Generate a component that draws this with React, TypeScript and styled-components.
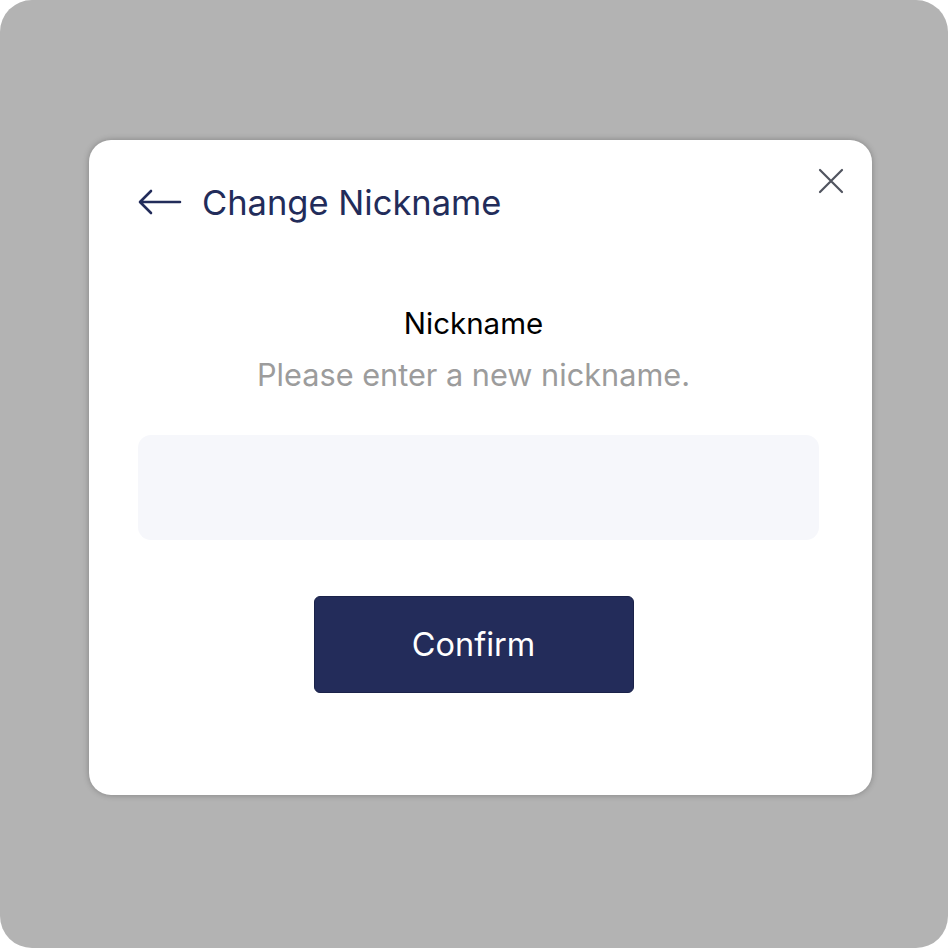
import styled, { createGlobalStyle } from 'styled-components'

const GlobalStyle = createGlobalStyle`
  html, body {
    margin: 0;
    padding: 0;
    background: #ffffff;
  }
  * {
    box-sizing: border-box;
  }
`

const App = () => {
    return (
        <>
            <GlobalStyle />
            <Screen>
                <Modal>
                    <CloseButton aria-label="Close">
                        <svg width="26" height="26" viewBox="0 0 26 26" fill="none">
                            <path d="M2 2L24 24M24 2L2 24" stroke="#50545f" strokeWidth="2.2" strokeLinecap="round" />
                        </svg>
                    </CloseButton>

                    <Header>
                        <BackButton aria-label="Back">
                            <svg width="44" height="26" viewBox="0 0 44 26" fill="none">
                                <path d="M42 13H3M13 2L2 13L13 24" stroke="#222c5a" strokeWidth="2.6" strokeLinecap="round" strokeLinejoin="round" />
                            </svg>
                        </BackButton>
                        <Title>Change Nickname</Title>
                    </Header>

                    <Body>
                        <Label>Nickname</Label>
                        <Hint>Please enter a new nickname.</Hint>
                        <Field type="text" />
                        <ConfirmButton>Confirm</ConfirmButton>
                    </Body>
                </Modal>
            </Screen>
        </>
    )
}

export default App

const Screen = styled.div`
width: 948px;
height: 948px;
background-color: #b3b3b3;
border-radius: 32px;
padding: 140px 76px 0 89px;
font-family: Inter, "Noto Sans", sans-serif;
`;

const Modal = styled.div`
position: relative;
width: 783px;
height: 655px;
background-color: #ffffff;
border-radius: 22px;
box-shadow: 0 0 6px rgba(0, 0, 0, 0.28);
padding: 42px 53px 0 49px;
display: flex;
flex-direction: column;
`;

const CloseButton = styled.button`
position: absolute;
top: 28px;
right: 28px;
width: 26px;
height: 26px;
padding: 0;
border: none;
background: none;
cursor: pointer;
display: flex;
`;

const Header = styled.div`
display: flex;
align-items: center;
gap: 20px;
height: 40px;
`;

const BackButton = styled.button`
padding: 0;
border: none;
background: none;
cursor: pointer;
display: flex;
`;

const Title = styled.h1`
margin: 0;
font-size: 34.5px;
font-weight: 400;
color: #222c5a;
`;

const Body = styled.div`
display: flex;
flex-direction: column;
align-items: center;
padding-top: 84px;
`;

const Label = styled.div`
margin-right: 10px;
font-size: 29.5px;
font-weight: 400;
color: #000000;
line-height: 34px;
`;

const Hint = styled.div`
margin-top: 17px;
margin-right: 10px;
font-size: 30.7px;
color: #9c9c9c;
line-height: 36px;
`;

const Field = styled.input`
margin-top: 42px;
width: 100%;
height: 105px;
border: none;
outline: none;
border-radius: 13px;
background-color: #f6f7fb;
font-family: inherit;
font-size: 26px;
padding: 0 24px;
`;

const ConfirmButton = styled.button`
margin-top: 56px;
margin-right: 10px;
width: 320px;
height: 97px;
border: 1px solid #1a2249;
border-radius: 6px;
background-color: #232c5a;
color: #ffffff;
font-family: inherit;
font-size: 32.5px;
cursor: pointer;
`;
